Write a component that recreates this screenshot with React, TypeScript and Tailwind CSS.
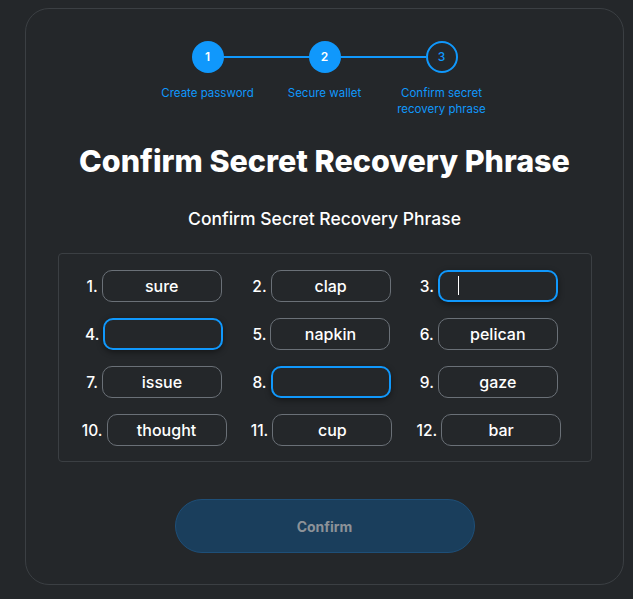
import React from "react";

const steps = [
  { n: "1", label: ["Create password"], done: true },
  { n: "2", label: ["Secure wallet"], done: true },
  { n: "3", label: ["Confirm secret", "recovery phrase"], done: false },
];

const words: { n: string; word?: string; focus?: boolean; caret?: boolean }[] = [
  { n: "1.", word: "sure" },
  { n: "2.", word: "clap" },
  { n: "3.", focus: true, caret: true },
  { n: "4.", focus: true },
  { n: "5.", word: "napkin" },
  { n: "6.", word: "pelican" },
  { n: "7.", word: "issue" },
  { n: "8.", focus: true },
  { n: "9.", word: "gaze" },
  { n: "10.", word: "thought" },
  { n: "11.", word: "cup" },
  { n: "12.", word: "bar" },
];

function Stepper() {
  return (
    <div className="flex flex-col items-center">
      <div className="flex items-center">
        {steps.map((s, i) => (
          <React.Fragment key={s.n}>
            {i > 0 && <div className="h-[2px] w-[85px] bg-[#1098fc]" />}
            <div
              className={
                s.done
                  ? "flex h-8 w-8 items-center justify-center rounded-full bg-[#1098fc] text-[12px] font-semibold text-white"
                  : "flex h-8 w-8 items-center justify-center rounded-full border-2 border-[#1098fc] text-[12px] font-medium text-[#1098fc]"
              }
            >
              {s.n}
            </div>
          </React.Fragment>
        ))}
      </div>
      <div className="mt-3 flex">
        {steps.map((s) => (
          <div key={s.n} className="w-[117px] text-center text-[11.5px] leading-4 text-[#1098fc]">
            {s.label.map((l) => (
              <div key={l}>{l}</div>
            ))}
          </div>
        ))}
      </div>
    </div>
  );
}

function WordCell({ n, word, focus, caret }: { n: string; word?: string; focus?: boolean; caret?: boolean }) {
  return (
    <div className="flex items-center justify-center gap-1">
      <span className="pt-[2px] text-[15.5px] font-medium text-white">{n}</span>
      <div
        className={
          focus
            ? "relative flex h-8 w-[120px] items-center rounded-[10px] border-2 border-[#1098fc] shadow-[0_2px_6px_rgba(0,0,0,0.45)]"
            : "flex h-8 w-[120px] items-center justify-center rounded-[10px] border border-[#6a7077] text-[16px] font-medium text-white"
        }
      >
        {word}
        {caret && <div className="ml-[18px] h-[19px] w-px bg-white" />}
      </div>
    </div>
  );
}

export default function App() {
  return (
    <div className="min-h-screen bg-[#24272a] pt-2 pl-[25px] font-['Inter',sans-serif]">
      <div className="flex h-[577px] w-[599px] flex-col items-center rounded-[24px] border border-[#3b3f43] pt-[32px]">
        <Stepper />
        <h1 className="mt-[26px] text-[30.5px] font-extrabold leading-9 text-white">Confirm Secret Recovery Phrase</h1>
        <p className="mt-[26px] text-[17.5px] font-medium leading-7 text-white">Confirm Secret Recovery Phrase</p>
        <div className="mt-5 grid h-[209px] w-[534px] grid-cols-3 content-center gap-y-4 rounded border border-[#3b3f43] pl-[12px] pr-[18px]">
          {words.map((w) => (
            <WordCell key={w.n} {...w} />
          ))}
        </div>
        <button className="mt-[37px] h-[54px] w-[300px] rounded-full border border-[#1e4f78] bg-[#1a3e5c] text-[14px] font-bold text-[#8c9298]">
          Confirm
        </button>
      </div>
    </div>
  );
}
